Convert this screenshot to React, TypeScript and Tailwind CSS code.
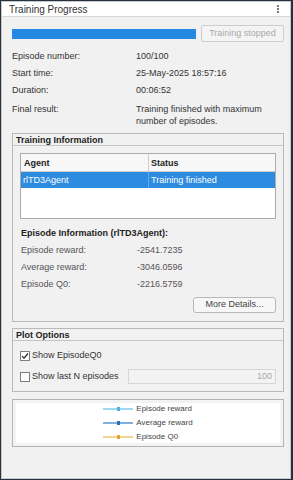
import React from 'react'

const font = { fontFamily: '"Liberation Sans", Arial, sans-serif' }

const SUMMARY = [
  { label: 'Episode number:', value: '100/100' },
  { label: 'Start time:', value: '25-May-2025 18:57:16' },
  { label: 'Duration:', value: '00:06:52' },
]

const EPISODE_INFO = [
  { label: 'Episode reward:', value: '-2541.7235' },
  { label: 'Average reward:', value: '-3046.0596' },
  { label: 'Episode Q0:', value: '-2216.5759' },
]

const LEGEND = [
  { name: 'Episode reward', line: 'bg-[#9fd8f4]', dot: 'bg-[#4fb0e6]' },
  { name: 'Average reward', line: 'bg-[#7fb0de]', dot: 'bg-[#2c6fb8]' },
  { name: 'Episode Q0', line: 'bg-[#f4d490]', dot: 'bg-[#e3a52a]' },
]

function Panel({ title, children }: { title: string; children: React.ReactNode }) {
  return (
    <div className="border border-[#b9b9b9] bg-[#f1f1f1]">
      <div className="h-[12px] leading-[12px] px-[3px] text-[9px] font-bold text-[#222] border-b border-[#c4c4c4]">
        {title}
      </div>
      {children}
    </div>
  )
}

export default function App() {
  return (
    <div style={font} className="w-[293px] h-[480px] border border-[#26313e] border-r-2 bg-[#26313e]">
      <div className="h-full flex flex-col border border-[#c9c9c9] bg-[#f1f1f1]">
        {/* Title bar */}
        <div className="h-[15px] shrink-0 bg-white border-b border-[#d6d6d6] flex items-center justify-between pl-[7px] pr-[11px]">
          <span className="text-[10px] text-[#333] leading-none pt-[2px]">Training Progress</span>
          <div className="flex flex-col gap-[1px]">
            <span className="w-[2px] h-[2px] bg-[#777]" />
            <span className="w-[2px] h-[2px] bg-[#777]" />
            <span className="w-[2px] h-[2px] bg-[#777]" />
          </div>
        </div>

        <div className="flex-1 pl-[9px] pr-[6px] pt-[8px]">
          {/* Progress + stop button */}
          <div className="flex items-center h-[17px]">
            <div className="w-[184px] h-[10px] bg-[#2389e2] ml-[1px]" />
            <button className="ml-auto w-[83px] h-[17px] rounded-[2px] border border-[#cdcdcd] bg-[#f4f4f4] text-[9px] text-[#a9a9a9]">
              Training stopped
            </button>
          </div>

          {/* Summary */}
          <div className="mt-[6px] text-[9px] text-[#333]">
            {SUMMARY.map((r) => (
              <div key={r.label} className="flex h-[17px] leading-[17px]">
                <span className="w-[125px] pl-[1px]">{r.label}</span>
                <span>{r.value}</span>
              </div>
            ))}
            <div className="flex pt-[4px] leading-[12px]">
              <span className="w-[125px] pl-[1px]">Final result:</span>
              <span className="w-[140px]">Training finished with maximum number of episodes.</span>
            </div>
          </div>

          <div className="mt-[6px] ml-[1px]">
            <Panel title="Training Information">
              <div className="px-[7px] pt-[7px] pb-[8px]">
                {/* Agent table */}
                <div className="border border-[#acacac] bg-white h-[66px] text-[9px]">
                  <div className="flex h-[18px] leading-[18px] bg-[#f7f7f7] border-b border-[#d0d0d0] font-bold text-[#222]">
                    <span className="w-[128px] pl-[3px] border-r border-[#cfcfcf]">Agent</span>
                    <span className="pl-[2px]">Status</span>
                  </div>
                  <div className="flex h-[16px] leading-[16px] bg-[#2d8ce0] text-white">
                    <span className="w-[128px] pl-[2px] border-r border-[#6aa9e4]">rlTD3Agent</span>
                    <span className="pl-[2px]">Training finished</span>
                  </div>
                </div>

                <div className="mt-[8px] text-[9px] font-bold text-[#222] leading-[12px] pl-[1px]">
                  Episode Information (rlTD3Agent):
                </div>
                <div className="mt-[3px] text-[9px] text-[#555]">
                  {EPISODE_INFO.map((r) => (
                    <div key={r.label} className="flex h-[17px] leading-[17px]">
                      <span className="w-[117px] pl-[1px]">{r.label}</span>
                      <span>{r.value}</span>
                    </div>
                  ))}
                </div>
                <div className="flex justify-end mt-[4px]">
                  <button className="w-[83px] h-[16px] rounded-[3px] border border-[#b8b8b8] bg-[#f7f7f7] text-[9px] text-[#444]">
                    More Details...
                  </button>
                </div>
              </div>
            </Panel>
          </div>

          <div className="mt-[6px] ml-[1px]">
            <Panel title="Plot Options">
              <div className="px-[7px] pt-[8px] pb-[7px] text-[9px] text-[#333]">
                <label className="flex items-center h-[13px] gap-[2px]">
                  <span className="w-[10px] h-[10px] border border-[#7d7d7d] bg-white flex items-center justify-center">
                    <svg width="8" height="8" viewBox="0 0 8 8">
                      <polyline points="1,4.2 3,6.2 7,1.5" fill="none" stroke="#222" strokeWidth="1.2" />
                    </svg>
                  </span>
                  <span>Show EpisodeQ0</span>
                </label>
                <div className="flex items-center mt-[7px] h-[15px]">
                  <span className="w-[10px] h-[10px] border border-[#7d7d7d] bg-white" />
                  <span className="ml-[2px]">Show last N episodes</span>
                  <div className="ml-auto w-[148px] h-[15px] border border-[#d6d6d6] bg-[#f3f3f3] text-right pr-[3px] leading-[13px] text-[#a8a8a8]">
                    100
                  </div>
                </div>
              </div>
            </Panel>
          </div>

          {/* Legend */}
          <div className="mt-[7px] ml-[1px] border border-[#b3b3b3] bg-[#f3f3f3] p-[3px]">
            <div className="bg-white h-[40px] flex justify-center">
              <div className="flex flex-col justify-center">
                {LEGEND.map((l) => (
                  <div key={l.name} className="flex items-center h-[14px] shrink-0">
                    <span className={`relative w-[30px] h-[2px] ${l.line}`}>
                      <span className={`absolute left-[14px] -top-[1px] w-[3px] h-[4px] ${l.dot}`} />
                    </span>
                    <span className="ml-[3px] text-[8px] text-[#444] leading-none">{l.name}</span>
                  </div>
                ))}
              </div>
            </div>
          </div>
        </div>
      </div>
    </div>
  )
}
